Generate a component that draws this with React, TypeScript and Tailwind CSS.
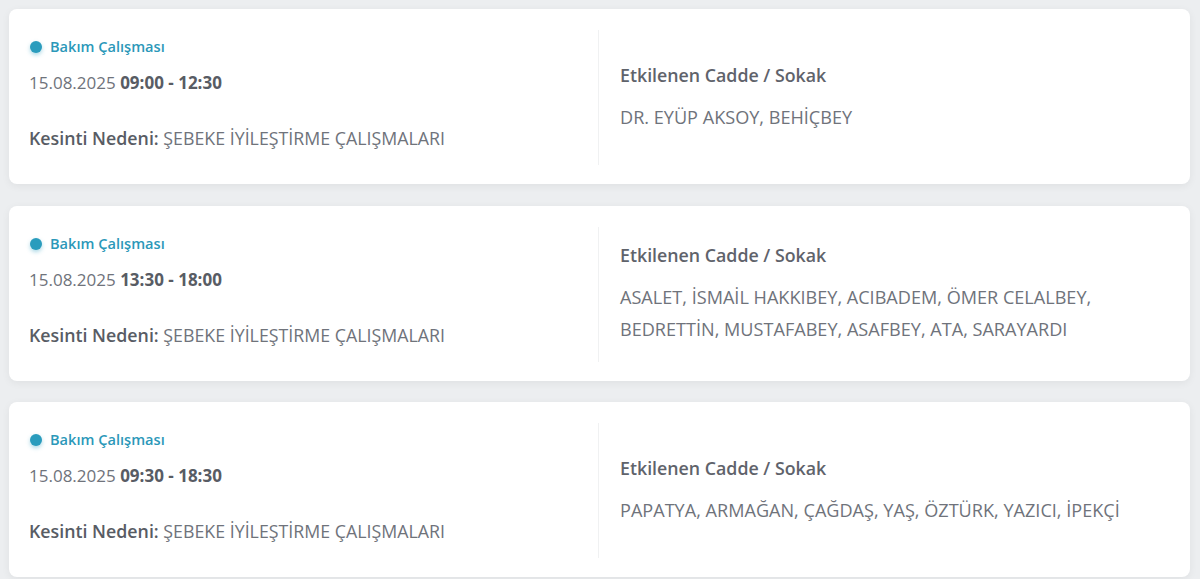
import React from "react";

type Item = { date: string; time: string; streets: string[] };

const items: Item[] = [
  { date: "15.08.2025", time: "09:00 - 12:30", streets: ["DR. EYÜP AKSOY, BEHİÇBEY"] },
  {
    date: "15.08.2025",
    time: "13:30 - 18:00",
    streets: ["ASALET, İSMAİL HAKKIBEY, ACIBADEM, ÖMER CELALBEY,", "BEDRETTİN, MUSTAFABEY, ASAFBEY, ATA, SARAYARDI"],
  },
  {
    date: "15.08.2025",
    time: "09:30 - 18:30",
    streets: ["PAPATYA, ARMAĞAN, ÇAĞDAŞ, YAŞ, ÖZTÜRK, YAZICI, İPEKÇİ"],
  },
];

function Card({ item }: { item: Item }) {
  return (
    <div className="h-[175px] rounded-[8px] bg-white px-5 py-[21px] shadow-[0_2px_8px_rgba(0,0,0,0.06)]">
      <div className="grid h-[135px] grid-cols-[569px_1fr]">
        <div className="flex flex-col">
          <div className="mt-[7px] flex h-[20px] items-center gap-[8px] pl-[1px]">
            <span className="h-[12px] w-[12px] rounded-full bg-[#2a9cbd] shadow-[0_2px_4px_rgba(42,156,189,0.4)]" />
            <span className="text-[14.6px] font-semibold text-[#2b98b9]">Bakım Çalışması</span>
          </div>
          <div className="mt-[14px] text-[17px] leading-6 text-[#6f737b]">
            {item.date} <span className="font-bold text-[#585c64]">{item.time}</span>
          </div>
          <div className="mt-[31px] text-[17.8px] leading-6 text-[#6f737b]">
            <span className="font-semibold text-[#585c64]">Kesinti Nedeni:</span> ŞEBEKE İYİLEŞTİRME ÇALIŞMALARI
          </div>
        </div>
        <div className="flex flex-col justify-center border-l border-[#f0f1f2] pl-[21px]">
          <div className="text-[17.8px] font-semibold leading-6 text-[#5f636b]">Etkilenen Cadde / Sokak</div>
          <div className="mt-[14px] text-[18.1px] leading-[32px] text-[#6f737b]">
            {item.streets.map((s, i) => (
              <div key={i}>{s}</div>
            ))}
          </div>
        </div>
      </div>
    </div>
  );
}

export default function App() {
  return (
    <div
      className="flex min-h-screen flex-col gap-[21.5px] bg-[#eceef0] p-[9px] pr-[10px]"
      style={{ fontFamily: '"Open Sans", "Noto Sans", sans-serif' }}
    >
      {items.map((it, i) => (
        <Card key={i} item={it} />
      ))}
    </div>
  );
}
